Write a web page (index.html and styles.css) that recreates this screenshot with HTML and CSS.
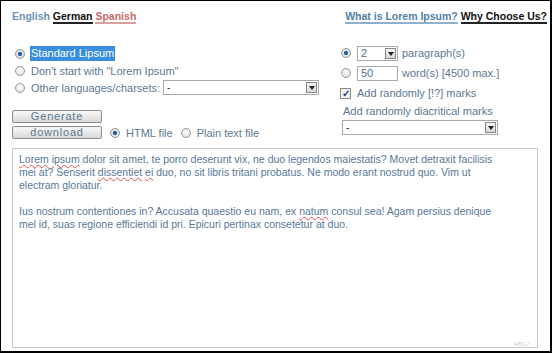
FILE: index.html
```html
<!DOCTYPE html>
<html lang="en">
<head>
  <meta charset="UTF-8">
  <title>Lorem Ipsum Generator</title>
  <link rel="stylesheet" href="styles.css">
</head>
<body>
  <div class="page">
    <header class="topbar">
      <nav class="langs">
        <a class="lang current" href="#">English</a>
        <a class="lang black" href="#">German</a>
        <a class="lang red" href="#">Spanish</a>
      </nav>
      <nav class="links">
        <a class="blue" href="#">What is Lorem Ipsum?</a>
        <a class="black" href="#">Why Choose Us?</a>
      </nav>
    </header>

    <section class="options">
      <div class="col-left">
        <div class="row"><span class="radio on"></span><span class="label selected">Standard Lipsum</span></div>
        <div class="row"><span class="radio"></span><span class="label">Don't start with "Lorem Ipsum"</span></div>
        <div class="row"><span class="radio"></span><span class="label">Other languages/charsets:</span>
          <div class="select wide"><span class="value">-</span><span class="arrow"></span></div>
        </div>
        <div class="buttons">
          <button class="btn">Generate</button>
          <div class="row">
            <button class="btn">download</button>
            <span class="radio on"></span><span class="label">HTML file</span>
            <span class="radio"></span><span class="label">Plain text file</span>
          </div>
        </div>
      </div>

      <div class="col-right">
        <div class="row"><span class="radio on"></span>
          <div class="select small"><span class="value">2</span><span class="arrow"></span></div>
          <span class="label">paragraph(s)</span></div>
        <div class="row"><span class="radio"></span>
          <div class="input small">50</div>
          <span class="label">word(s) [4500 max.]</span></div>
        <div class="row"><span class="check">&#10003;</span><span class="label">Add randomly [!?] marks</span></div>
        <div class="label diacr">Add randomly diacritical marks</div>
        <div class="select mid"><span class="value">-</span><span class="arrow"></span></div>
      </div>
    </section>

    <div class="output">
      <p><span class="typo">Lorem</span> <span class="typo">ipsum</span> dolor sit amet, te porro deserunt vix, ne duo legendos maiestatis? Movet detraxit facilisis<br>mei at? Senserit <span class="typo">dissentiet</span> <span class="typo">ei</span> duo, no sit libris tritani probatus. Ne modo erant nostrud quo. Vim ut<br>electram gloriatur.</p>
      <p>Ius nostrum contentiones in? Accusata quaestio eu nam, ex <span class="typo">natum</span> consul sea! Agam persius denique<br>mel id, suas regione efficiendi id pri. Epicuri pertinax consetetur at duo.</p>
      <span class="abc">ABC&#10003;</span>
    </div>
  </div>
</body>
</html>
```

FILE: styles.css
```css
html, body {
  margin: 0;
  height: 100%;
}

body {
  font-family: "Liberation Sans", Arial, sans-serif;
  font-size: 11px;
  color: #5c7893;
  background: #000;
}

.page {
  box-sizing: border-box;
  height: 353px;
  width: 552px;
  background: #fff;
  border-style: solid;
  border-color: #000;
  border-width: 1px 2px 2px 1px;
  padding: 0 3px 0 10px;
}

.topbar {
  display: flex;
  justify-content: space-between;
  padding-top: 9px;
  height: 22px;
  font-size: 10.5px;
  font-weight: bold;
  white-space: nowrap;
}

.topbar a {
  text-decoration: none;
}

.langs { padding-left: 1px; }

.lang.current {
  color: #6e93b4;
}

.black {
  color: #111;
  border-bottom: 2px solid #222;
}

.red {
  color: #c86a6a;
  border-bottom: 2px solid #d9a0a0;
}

.blue {
  color: #4f7fa8;
  border-bottom: 2px solid #8fb0cc;
}

.options {
  display: flex;
  padding-top: 13px;
}

.col-left {
  width: 329px;
}

.col-right {
  width: 160px;
  margin-top: -2px;
}

.row {
  display: flex;
  align-items: center;
  height: 17px;
}

.col-right .row {
  height: 20px;
}

.label {
  white-space: nowrap;
}

.selected {
  background: #3a8ee0;
  color: #fff;
  padding: 1px 1px 2px;
  margin-left: -1px;
}

.radio {
  box-sizing: border-box;
  width: 10px;
  height: 10px;
  border-radius: 50%;
  border: 1px solid #9a9a9a;
  background: radial-gradient(circle at 50% 40%, #fff 0, #e6e6e6 70%, #cfcfcf 100%);
  margin: 0 6px 0 4px;
  flex: none;
}

.radio.on {
  background: radial-gradient(circle, #1d4f9a 0, #2a66b8 30%, #e6e6e6 45%, #cfcfcf 100%);
}

.col-right .radio {
  margin: 0 6px 0 1px;
}

.check {
  box-sizing: border-box;
  width: 11px;
  height: 11px;
  border: 1px solid #8a8a8a;
  background: #f2f2f2;
  color: #1a3f8a;
  font-size: 10px;
  font-weight: bold;
  line-height: 9px;
  text-align: center;
  margin: 0 6px 0 0;
}

.select, .input {
  box-sizing: border-box;
  display: flex;
  align-items: center;
  height: 15px;
  border: 1px solid #a9a9a9;
  background: #fff;
  color: #333;
  font-size: 10px;
  padding-left: 3px;
}

.select .value { flex: 1; }

.select .arrow {
  width: 11px;
  height: 11px;
  margin-right: 1px;
  border: 1px solid #888;
  background: linear-gradient(#f4f4f4, #d8d8d8);
  position: relative;
  box-sizing: border-box;
}

.select .arrow::after {
  content: "";
  position: absolute;
  left: 2px;
  top: 3px;
  border-left: 3px solid transparent;
  border-right: 3px solid transparent;
  border-top: 4px solid #222;
}

.select.wide {
  width: 156px;
  margin-left: 3px;
}

.select.small, .input.small {
  width: 41px;
  margin-right: 4px;
  color: #4a6f95;
  font-size: 11px;
}

.diacr {
  margin: 2px 0 0 3px;
  height: 13px;
}

.select.mid {
  width: 156px;
  margin-top: 2px;
  margin-left: 2px;
}

.buttons {
  margin-top: 14px;
  display: flex;
  flex-direction: column;
  gap: 3px;
}

.buttons .row { height: 13px; }

.btn {
  box-sizing: border-box;
  width: 90px;
  height: 13px;
  padding: 0;
  margin-left: 1px;
  border: 1px solid #8d8d8d;
  border-radius: 2px;
  background: linear-gradient(#f8f8f8, #d9d9d9);
  font-family: inherit;
  font-size: 11px;
  line-height: 11px;
  letter-spacing: 0.8px;
  color: #5c7893;
}

.buttons .row .btn { margin-right: 4px; }

.buttons .row .label { margin-right: 4px; }

.output {
  position: relative;
  box-sizing: border-box;
  margin-top: 9px;
  margin-left: 1px;
  width: 526px;
  height: 200px;
  border: 1px solid #c8c8c8;
  padding: 4px 6px;
  line-height: 13px;
  font-size: 10.5px;
  color: #587899;
}

.output p {
  margin: 0 0 13px;
}

.typo {
  text-decoration: underline wavy #e05050;
  text-decoration-thickness: 1px;
  text-underline-offset: 1px;
}

.abc {
  position: absolute;
  right: 6px;
  bottom: -4px;
  font-size: 6px;
  color: #ccc;
}
```
